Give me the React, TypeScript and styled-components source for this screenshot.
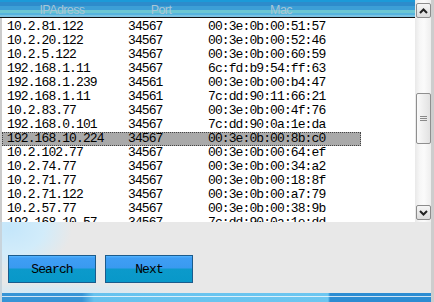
import React from "react";
import styled, { createGlobalStyle } from "styled-components";

type Host = { ip: string; port: string; mac: string };

const hosts: Host[] = [
  { ip: "10.2.81.122", port: "34567", mac: "00:3e:0b:00:51:57" },
  { ip: "10.2.20.122", port: "34567", mac: "00:3e:0b:00:52:46" },
  { ip: "10.2.5.122", port: "34567", mac: "00:3e:0b:00:60:59" },
  { ip: "192.168.1.11", port: "34567", mac: "6c:fd:b9:54:ff:63" },
  { ip: "192.168.1.239", port: "34561", mac: "00:3e:0b:00:b4:47" },
  { ip: "192.168.1.11", port: "34561", mac: "7c:dd:90:11:66:21" },
  { ip: "10.2.83.77", port: "34567", mac: "00:3e:0b:00:4f:76" },
  { ip: "192.168.0.101", port: "34567", mac: "7c:dd:90:0a:1e:da" },
  { ip: "192.168.10.224", port: "34567", mac: "00:3e:0b:00:8b:c0" },
  { ip: "10.2.102.77", port: "34567", mac: "00:3e:0b:00:64:ef" },
  { ip: "10.2.74.77", port: "34567", mac: "00:3e:0b:00:34:a2" },
  { ip: "10.2.71.77", port: "34567", mac: "00:3e:0b:00:18:8f" },
  { ip: "10.2.71.122", port: "34567", mac: "00:3e:0b:00:a7:79" },
  { ip: "10.2.57.77", port: "34567", mac: "00:3e:0b:00:38:9b" },
  { ip: "192.168.10.57", port: "34567", mac: "7c:dd:90:0a:1e:dd" },
];

const SELECTED = 8;

const Chevron = ({ down }: { down?: boolean }) => (
  <svg width="9" height="6" viewBox="0 0 9 6">
    <polyline
      points={down ? "1,1 4.5,4.5 8,1" : "1,5 4.5,1.5 8,5"}
      fill="none"
      stroke="#222"
      strokeWidth="2"
    />
  </svg>
);

const App = () => {
  return (
    <>
      <GlobalStyle />
      <Window>
        <Top>
          <ListArea>
            <Header>
              <HeadCell>IPAdress</HeadCell>
              <HeadCell>Port</HeadCell>
              <HeadCell>Mac</HeadCell>
            </Header>
            <Body>
              {hosts.map((h, i) => (
                <Row key={i} $selected={i === SELECTED}>
                  <span>{h.ip}</span>
                  <span>{h.port}</span>
                  <span>{h.mac}</span>
                </Row>
              ))}
            </Body>
          </ListArea>
          <ScrollBar>
            <ScrollButton>
              <Chevron />
            </ScrollButton>
            <Thumb>
              <Grip />
            </Thumb>
            <ScrollButton $bottom>
              <Chevron down />
            </ScrollButton>
          </ScrollBar>
        </Top>
        <Bottom>
          <Buttons>
            <Button>Search</Button>
            <Button>Next</Button>
          </Buttons>
          <Footer />
        </Bottom>
      </Window>
    </>
  );
};

export default App;

const GlobalStyle = createGlobalStyle`
  body {
    margin: 0;
    overflow: hidden;
    background: #e8e8e8;
  }
`;

const Window = styled.div`
  box-sizing: border-box;
  width: 434px;
  height: 302px;
  display: grid;
  grid-template-rows: 222px 80px;
  border-right: 3px solid #cdcdcd;
  font-family: "Liberation Mono", "DejaVu Sans Mono", monospace;
  font-size: 13px;
  letter-spacing: -0.9px;
  color: #000;
`;

const Top = styled.div`
  display: flex;
  overflow: hidden;
`;

const ListArea = styled.div`
  flex: 1;
  display: flex;
  flex-direction: column;
  min-width: 0;
`;

const Header = styled.div`
  height: 17px;
  flex-shrink: 0;
  display: grid;
  grid-template-columns: 124px 74px 166px;
  border-bottom: 1px solid #111;
  background: linear-gradient(
    to bottom,
    #1c9ad8 0,
    #1c9ad8 2px,
    #2d8ccb 2px,
    #2d8ccb 6px,
    #3c9fd6 6px,
    #3c9fd6 10px,
    #6cc6d2 10px,
    #6cc6d2 13px,
    #56b4de 13px,
    #56b4de 15px,
    #7cc2e2 15px
  );
`;

const HeadCell = styled.div`
  font-family: "Liberation Sans", Arial, sans-serif;
  font-size: 12.5px;
  letter-spacing: -0.6px;
  line-height: 20px;
  text-align: center;
  color: #a9c6d6;
`;

const Body = styled.div`
  flex: 1;
  padding-top: 2px;
  background: #fff;
  border-left: 2px solid #cccccc;
  overflow: hidden;
`;

const Row = styled.div<{ $selected?: boolean }>`
  box-sizing: border-box;
  width: 359px;
  height: 14px;
  padding-left: 5px;
  display: grid;
  grid-template-columns: 121px 80px 1fr;
  line-height: 14px;
  white-space: nowrap;
  background: ${(p) => (p.$selected ? "#a9a9a9" : "transparent")};
  outline: ${(p) => (p.$selected ? "1px dotted #444" : "none")};
  outline-offset: -1px;
`;

const ScrollBar = styled.div`
  width: 16px;
  flex-shrink: 0;
  display: flex;
  flex-direction: column;
  align-items: flex-end;
  padding: 3px 0 2px;
  box-sizing: border-box;
  background: linear-gradient(
    to right,
    #e9e9e9 0,
    #f7f7f7 5px,
    #fbfbfb 9px,
    #eeeeee 16px
  );
`;

const ScrollButton = styled.div<{ $bottom?: boolean }>`
  box-sizing: border-box;
  width: 15px;
  height: 15px;
  margin-top: ${(p) => (p.$bottom ? "auto" : "0")};
  display: flex;
  align-items: center;
  justify-content: center;
  border: 1px solid #8c8c8c;
  border-radius: 2px;
  background: linear-gradient(to bottom, #f6f6f6, #dcdcdc);
`;

const Thumb = styled.div`
  box-sizing: border-box;
  width: 15px;
  height: 51px;
  margin-top: 75px;
  display: flex;
  align-items: center;
  justify-content: center;
  border: 1px solid #8f8f8f;
  border-radius: 2px;
  background: linear-gradient(to right, #fafafa, #e2e2e2);
`;

const Grip = styled.div`
  width: 7px;
  height: 5px;
  background: repeating-linear-gradient(
    to bottom,
    #8a8a8a 0,
    #8a8a8a 1px,
    transparent 1px,
    transparent 2px
  );
`;

const Bottom = styled.div`
  display: flex;
  flex-direction: column;
  border-left: 2px solid #c8d4dc;
  background: radial-gradient(
      ellipse 62px 46px at 8px 6px,
      #c4e6fa 0,
      #d2ecfa 55%,
      rgba(232, 232, 232, 0) 100%
    ),
    radial-gradient(
      ellipse 120px 10px at 50px 70px,
      #cfe9f8 0,
      rgba(232, 232, 232, 0) 100%
    ),
    #e8e8e8;
`;

const Buttons = styled.div`
  display: flex;
  gap: 9px;
  padding: 33px 0 0 6px;
  height: 28px;
`;

const Button = styled.div`
  box-sizing: border-box;
  width: 88px;
  height: 28px;
  display: flex;
  align-items: center;
  justify-content: center;
  border: 1px solid #1b5b8c;
  background: linear-gradient(
    to bottom,
    #55b6ff 0,
    #3f9ef4 2px,
    #3a9af0 12px,
    #0c9acb 13px,
    #0898c9 100%
  );
  cursor: pointer;
`;

const Footer = styled.div`
  margin-top: auto;
  height: 9px;
  background: linear-gradient(
      to bottom,
      transparent 3px,
      rgba(255, 255, 255, 0.75) 3px,
      rgba(255, 255, 255, 0.75) 4px,
      transparent 4px
    ),
    linear-gradient(
      to right,
      #3694d6 0,
      #3694d6 80px,
      #66c2ee 92px,
      #6cc6f0 326px,
      #2c8cd2 328px,
      #2c8cd2 100%
    );
`;
